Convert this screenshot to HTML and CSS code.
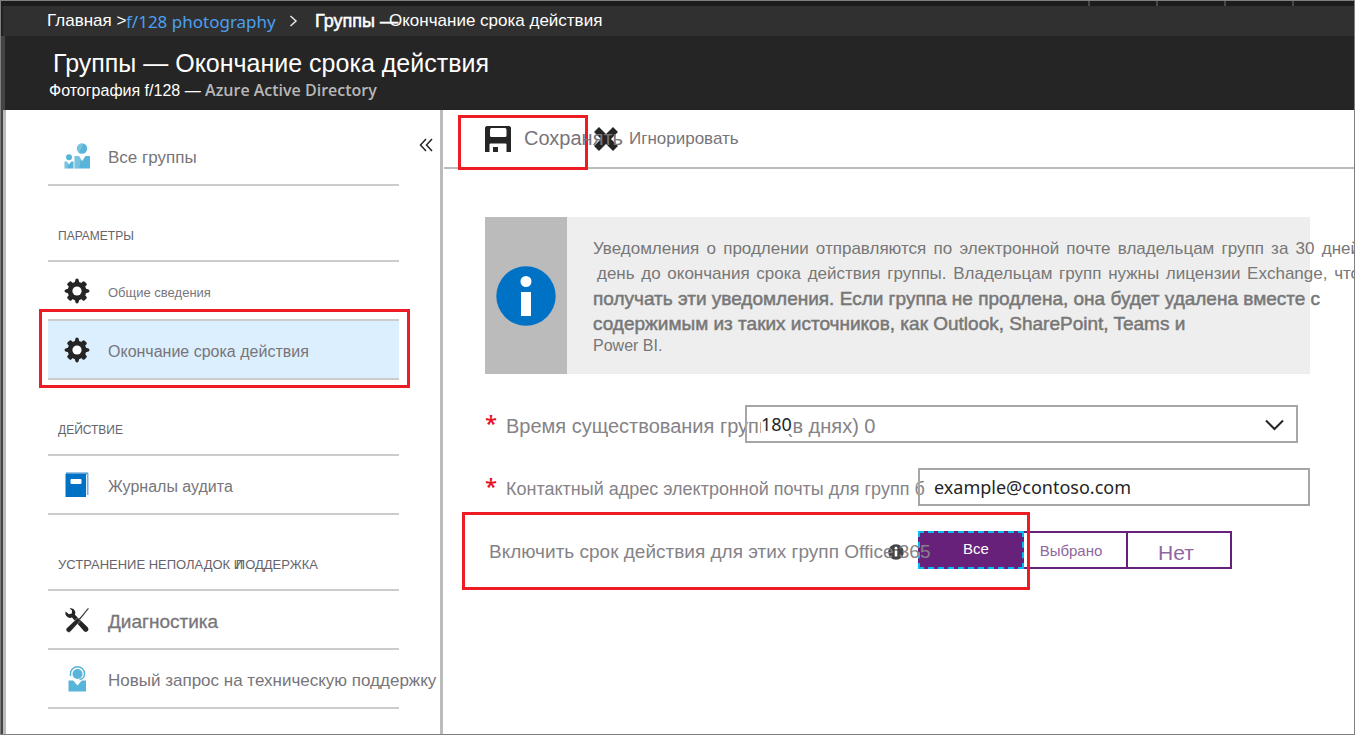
FILE: index.html
```
<!DOCTYPE html>
<html lang="ru">
<head>
<meta charset="utf-8">
<title>Группы — Окончание срока действия</title>
<link rel="stylesheet" href="styles.css">
</head>
<body>
<svg class="sprite" aria-hidden="true">
  <symbol id="gear" viewBox="0 0 26 26">
    <g fill="#252525">
      <path d="M10.500 5L11.500 1.500Q13-.5 14.500 1.500L15.500 5v16l-1 3.500q-1.500 2-3 0L10.500 21z"/>
      <path d="M10.500 5L11.500 1.500Q13-.5 14.500 1.500L15.500 5v16l-1 3.500q-1.500 2-3 0L10.500 21z" transform="rotate(90 13 13)"/>
      <rect x="10.300" y="1" width="5.400" height="24" rx="1.500" transform="rotate(45 13 13)"/>
      <rect x="10.300" y="1" width="5.400" height="24" rx="1.500" transform="rotate(135 13 13)"/>
      <circle cx="13" cy="13" r="9.300"/>
    </g>
    <circle class="hub" cx="13" cy="13" r="4.600"/>
  </symbol>
</svg>
<div class="frame">
  <div class="topstrip"><i></i><i></i><i></i><i></i></div>
  <nav class="crumbs" aria-label="Навигация">
    <a class="crumb-home" href="#">Главная &gt;</a>
    <a class="crumb-link" href="#">f/128 photography</a>
    <svg class="crumb-sep" width="9" height="12" viewBox="0 0 9 12"><path d="M1.500 1L7 6l-5.500 5" fill="none" stroke="#e6e6e6" stroke-width="1.500"/></svg>
    <span class="crumb-strong">Группы —</span>
    <span class="crumb-last">Окончание срока действия</span>
  </nav>
  <header class="head">
    <h1>Группы — Окончание срока действия</h1>
    <p>Фотография f/128 — <b>Azure Active Directory</b></p>
  </header>
  <div class="body">
    <aside class="side">
      <button class="collapse" aria-label="Свернуть"><svg width="14" height="14" viewBox="0 0 14 14"><path d="M7 1L1.500 7 7 13M13 1L7.500 7l5.500 6" fill="none" stroke="#252525" stroke-width="1.500"/></svg></button>
      <a class="item wide" href="#">
        <svg width="26" height="26" viewBox="0 0 26 26"><g fill="#59b4d9"><circle cx="18" cy="5.500" r="5.200"/><path d="M10.500 13h4.500l3.200 5 3.300-5H26v12.500H10.500z"/><circle cx="5" cy="14.200" r="3"/><path d="M.5 18.500h2.300L5 21.500l2.300-3h2.200v7H.5z"/></g><path d="M18 .3a5.200 5.200 0 0 0-3 9.400L19.500.600zM10.500 13H15l2 3-2 9.500h-4.500zM.5 18.500h2.300l1.500 2-.8 5H.5z" fill="#fff" opacity=".2"/></svg>
        <span>Все группы</span>
      </a>
      <h2>ПАРАМЕТРЫ</h2>
      <a class="item small" href="#"><svg width="26" height="26"><use href="#gear"/></svg><span>Общие сведения</span></a>
      <a class="item selected" href="#"><svg width="26" height="26"><use href="#gear"/></svg><span>Окончание срока действия</span><i class="mark mark-item"></i></a>
      <h2>ДЕЙСТВИЕ</h2>
      <a class="item" href="#">
        <svg width="26" height="26" viewBox="0 0 26 26"><path d="M3 1h21.500v22H22V3H3z" fill="#7ab1de"/><path d="M2 .5h22v1H4L3 2.500H2z" fill="#3f8fd0"/><path d="M1.500 2H22v23H1.500z" fill="#0072c6"/><rect x="22" y="2.500" width=".8" height="21" fill="#fff"/><rect x="6.500" y="7" width="11" height="5" rx="1" fill="#fff"/></svg>
        <span>Журналы аудита</span>
      </a>
      <h2 class="long">УСТРАНЕНИЕ НЕПОЛАДОК <span class="tight">И</span>ПОДДЕРЖКА</h2>
      <a class="item big" href="#">
        <svg width="26" height="26" viewBox="0 0 26 26"><g fill="#252525"><path d="M5.500 1.500Q9.500.500 11 4q.8 2-.1 3.800l13 12.700q1.400 2-.2 3.600t-3.600.1L8 10.600Q4 11.800 2 8.500 1 6.500 1.500 4.500L5 7.200l2.800-.8.300-2.800z"/><path d="M24 .8l.9.900-8 10-1.200 1.300.8.800L6.500 24.500q-1.700 1.800-3.500.1t-.2-3.500L13.500 11l.9.800L16 10.500z" stroke="#fff" stroke-width=".4"/></g></svg>
        <span>Диагностика</span>
      </a>
      <a class="item wide" href="#">
        <svg width="26" height="26" viewBox="0 0 26 26"><g fill="#59b4d9"><circle cx="13.500" cy="8" r="5"/><path d="M4.500 14.500h4.700l4.300 5 4.300-5h4.200V25.500H4.500z"/></g><path d="M6.500 10V7.500a7 6.700 0 0 1 14 0c0 3-1.500 5.500-5 6" fill="none" stroke="#59b4d9" stroke-width="1.500"/></svg>
        <span>Новый запрос на техническую поддержку</span>
      </a>
    </aside>
    <main class="main">
      <div class="toolbar">
        <button class="tool save"><svg width="26" height="26" viewBox="0 0 26 26"><path fill="#252525" fill-rule="evenodd" d="M1.500 0h23L26 1.500V26h-4.500v-7.500q0-1-1-1H5.500q-1 0-1 1V26H0V1.500zM5 4v5.500q0 1.500 1.500 1.500h13.500q1.500 0 1.500-1.500V4Q21.500 2 20 2H6.500Q5 2 5 4zM8 21h5v5H8z"/></svg><span>Сохранять</span></button>
        <button class="tool discard"><svg width="24" height="24" viewBox="0 0 24 24"><path d="M2.500 2.500l19 19M21.500 2.500l-19 19" stroke="#252525" stroke-width="7"/></svg><span>Игнорировать</span></button>
        <i class="mark mark-save"></i>
      </div>
      <section class="info">
        <div class="info-icon"><svg width="60" height="60" viewBox="0 0 60 60"><circle cx="30" cy="30" r="29.700" fill="#0072c6"/><circle cx="30" cy="15.500" r="5.500" fill="#fff"/><path d="M25 26h10v24H25z" fill="#fff"/></svg></div>
        <div class="info-text">
          <p class="light">Уведомления о продлении отправляются по электронной почте владельцам групп за 30 дней</p>
          <p class="light second">день до окончания срока действия группы. Владельцам групп нужны лицензии Exchange, чтобы</p>
          <p class="strong">получать эти уведомления. Если группа не продлена, она будет удалена вместе с</p>
          <p class="strong">содержимым из таких источников, как Outlook, SharePoint, Teams и</p>
          <p class="last">Power BI.</p>
        </div>
      </section>
      <form class="form">
        <div class="row life">
          <label for="life"><b>*</b><span>Время существования групп</span><span class="unit">(в днях) 0</span></label>
          <div class="pick">
            <select id="life"><option>180</option></select>
            <svg width="19" height="12" viewBox="0 0 19 12"><path d="M1 1.500l8.500 8.500L18 1.500" fill="none" stroke="#252525" stroke-width="2"/></svg>
          </div>
        </div>
        <div class="row mail">
          <label for="mail"><b>*</b><span>Контактный адрес электронной почты для групп б</span></label>
          <input id="mail" type="text" value="example@contoso.com">
        </div>
        <div class="row scope">
          <div class="scope-label" id="scope"><span>Включить срок действия для этих групп Office 365</span>
            <svg class="tip" width="16" height="16" viewBox="0 0 16 16"><circle cx="8" cy="8" r="7.800" fill="#444"/><circle cx="8" cy="4.200" r="1.400" fill="#fff"/><path d="M6.700 6.500h2.600v6H6.700z" fill="#fff"/></svg>
          </div>
          <div class="toggle" role="group" aria-labelledby="scope">
            <button type="button" class="on">Все</button><button type="button" class="some">Выбрано</button><button type="button" class="none">Нет</button>
          </div>
          <i class="mark mark-scope"></i>
        </div>
      </form>
    </main>
  </div>
</div>
</body>
</html>
```
FILE: styles.css
```
* { box-sizing: border-box; }
body { margin: 0; font-family: "Liberation Sans", Arial, sans-serif; color: #77757a; background: #fff; }
h1, h2, p { margin: 0; font-weight: 400; }
a { color: inherit; text-decoration: none; }
button { border: 0; padding: 0; background: none; color: inherit; font-family: inherit; }
svg { display: block; flex: none; }
.sprite { position: absolute; width: 0; height: 0; }
.frame { display: flex; flex-direction: column; min-height: 100vh; border: 1px solid #7f7f7f; overflow: hidden; }

.topstrip { display: flex; justify-content: flex-end; gap: 66px; height: 5px; padding-right: 60px; background: #1c1c1c; }
.topstrip i { width: 2px; background: #484848; }
.crumbs { display: flex; align-items: center; height: 30px; padding-left: 44px; border-left: 2px solid #222; background: #303030; color: #fff; white-space: nowrap; }
.crumb-home { width: 79px; font-size: 17px; }
.crumb-link { font: 17px "Noto Sans", sans-serif; color: #4ba0f0; width: 163px; }
.crumb-sep { margin-right: 17px; }
.crumb-strong { width: 74px; font-size: 18px; -webkit-text-stroke: 0.5px #fff; }
.crumb-last { font-size: 17px; }

.head { height: 74px; padding: 12px 0 0 48px; border-left: 4px solid #444; background: #252525; color: #fff; white-space: nowrap; }
.head h1 { font-size: 25px; line-height: 30px; }
.head p { padding-top: 1px; margin-left: -4px; font-size: 16px; line-height: 24px; }
.head b { font: 600 16px/20px "Open Sans", sans-serif; color: #b8b8b8; }

.body { display: flex; flex: 1; border-left: 2px solid #444; }
.side { position: relative; flex: none; width: 440px; padding: 17px 41px 20px 42px; border: solid #bbb; border-width: 0 3px; white-space: nowrap; }
.collapse { position: absolute; top: 28px; right: 7px; }
.item { position: relative; display: flex; align-items: center; gap: 18px; height: 59px; padding-left: 16px; border-bottom: 2px solid #ccc; font-size: 16px; }
.item span { padding-top: 4px; }
.item.small { font-size: 13px; }
.item.wide { font-size: 17px; }
.item.big { font-size: 19px; -webkit-text-stroke: 0.3px; }
.item.selected { background: #dceffe; }
.hub { fill: #fff; }
.side h2 { height: 76px; padding: 40px 0 0 10px; border-bottom: 2px solid #ccc; font-size: 12px; line-height: 20px; color: #66646a; }
.side h2.long { font-size: 13px; }
.tight { display: inline-block; width: 2px; }

.mark { position: absolute; border: 3px solid #ed1c24; pointer-events: none; }
.mark-item { inset: -12px -11px -10px -9px; }
.mark-save { left: 14px; top: 5px; width: 130px; height: 55px; }
.mark-scope { left: -23px; top: -19px; width: 568px; height: 78px; }

.main { flex: 1; min-width: 0; }
.toolbar { position: relative; display: flex; height: 59px; margin-left: 1px; padding-left: 41px; border-bottom: 2px solid #bbb; }
.tool { display: flex; align-items: center; height: 57px; white-space: nowrap; }
.save { z-index: 1; width: 109px; gap: 13px; font-size: 20px; }
.discard { gap: 11px; font-size: 17px; }

.info { display: flex; margin: 48px 44px 0 42px; background: #eee; color: #777; white-space: nowrap; }
.info-icon { display: flex; flex: none; align-items: center; justify-content: center; width: 82px; background: #bbb; }
.info-text { width: 0; flex: 1; padding: 19px 0 18px 26px; line-height: 25px; }
.light { margin-right: -50px; font-size: 17px; white-space: normal; text-align: justify; text-align-last: justify; }
.second { margin-right: -72px; padding-left: 4px; }
.strong { font-size: 19px; -webkit-text-stroke: 0.5px; }
.last { font-size: 16px; line-height: 20px; }

.form { display: flex; flex-direction: column; gap: 25px; margin: 31px 44px 0 42px; color: #858387; }
.row { position: relative; display: flex; height: 38px; white-space: nowrap; }
.row label { display: flex; align-items: center; flex: none; font-size: 18px; width: 433px; }
.row b { flex: none; width: 21px; padding-bottom: 4px; font: 600 22px "Open Sans", sans-serif; color: #e81123; }
.row span { flex: none; padding-top: 4px; }
.life { padding-right: 12px; }
.row.life label { width: 260px; font-size: 20px; }
.unit { margin-left: 16px; }
.pick { position: relative; flex: 1; }
.pick svg { position: absolute; right: 14px; top: 14px; pointer-events: none; }
select, input { width: 100%; height: 38px; border: 2px solid #a6a6a6; border-radius: 0; padding: 0 14px; background: linear-gradient(#fff, #fff) 14px center / 31px 20px no-repeat; appearance: none; font: 18px "Noto Sans", sans-serif; color: #252525; }
input { position: relative; flex: 1; width: 0; background-size: 200px 22px; }
.scope-label { position: relative; display: flex; align-items: center; flex: none; width: 433px; padding-left: 4px; font-size: 19px; }
.scope-label span { position: relative; z-index: 1; }
.tip { position: absolute; left: 403px; top: 13px; }
.toggle { display: flex; }
.toggle button { width: 106px; margin-right: -2px; border: 2px solid #68217a; font-size: 15px; color: #8f66a0; }
.toggle .on { position: relative; padding: 0 0 4px 10px; border: 2px dashed #00bcf2; background: #68217a; color: #fff; }
.toggle .some { padding-right: 8px; }
.toggle .none { padding: 6px 6px 0 0; font-size: 21px; }
```
